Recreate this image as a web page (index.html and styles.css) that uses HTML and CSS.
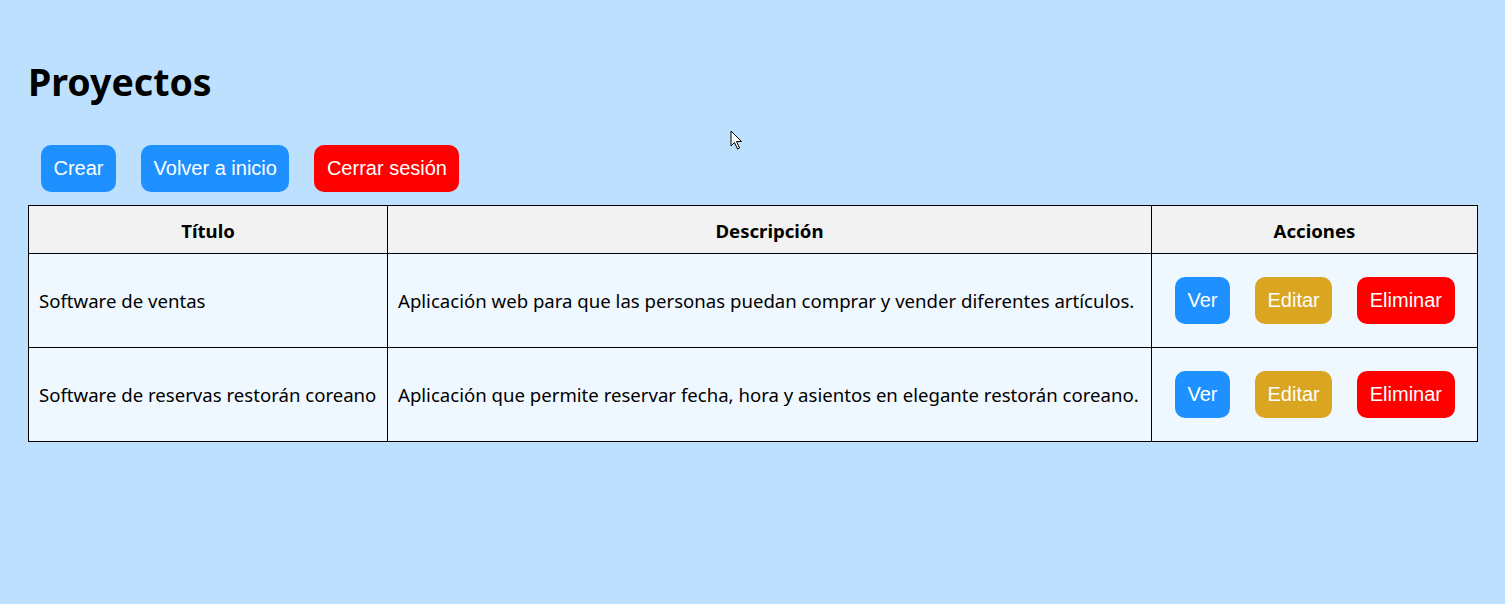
FILE: index.html
```html
<!DOCTYPE html>
<html lang="es">
<head>
<meta charset="utf-8">
<title>Proyectos</title>
<link rel="stylesheet" href="styles.css">
</head>
<body>
<h1 class="title">Proyectos</h1>
<div class="toolbar">
  <a class="btn btn-blue" href="#">Crear</a>
  <a class="btn btn-blue" href="#">Volver a inicio</a>
  <a class="btn btn-red" href="#">Cerrar sesión</a>
</div>
<table class="grid">
  <colgroup>
    <col class="c1"><col class="c2"><col class="c3">
  </colgroup>
  <thead>
    <tr><th>Título</th><th>Descripción</th><th>Acciones</th></tr>
  </thead>
  <tbody>
    <tr>
      <td>Software de ventas</td>
      <td>Aplicación web para que las personas puedan comprar y vender diferentes artículos.</td>
      <td class="actions"><div class="action-row"><a class="btn btn-blue" href="#">Ver</a><a class="btn btn-gold" href="#">Editar</a><a class="btn btn-red" href="#">Eliminar</a></div></td>
    </tr>
    <tr>
      <td>Software de reservas restorán coreano</td>
      <td>Aplicación que permite reservar fecha, hora y asientos en elegante restorán coreano.</td>
      <td class="actions"><div class="action-row"><a class="btn btn-blue" href="#">Ver</a><a class="btn btn-gold" href="#">Editar</a><a class="btn btn-red" href="#">Eliminar</a></div></td>
    </tr>
  </tbody>
</table>
<svg class="cursor" width="14" height="22" viewBox="0 0 14 22"><path d="M1 1 L1 16 L4.5 12.5 L7.5 19 L9.5 18 L6.5 11.5 L11.5 11.5 Z" fill="#fff" stroke="#000" stroke-width="1"/></svg>
</body>
</html>
```
FILE: styles.css
```css
html, body {
  margin: 0;
  padding: 0;
}
body {
  background: #bde0fe;
  font-family: "Noto Sans", "Open Sans", sans-serif;
  color: #000;
  padding: 0 28px;
  position: relative;
  min-height: 604px;
  box-sizing: border-box;
}
.title {
  margin: 0;
  padding-top: 54px;
  font-size: 37.5px;
  font-weight: 700;
  line-height: 56px;
}
.toolbar {
  display: flex;
  gap: 25px;
  padding: 35px 13px 13px;
}
.btn {
  display: inline-block;
  font-family: "Liberation Sans", Arial, sans-serif;
  font-size: 20px;
  line-height: 23px;
  padding: 12px 12.5px;
  border-radius: 10px;
  color: #fff;
  text-decoration: none;
}
.btn-blue { background: #1e90ff; }
.btn-red { background: #ff0000; }
.btn-gold { background: #daa520; }
.grid {
  width: 100%;
  border-collapse: collapse;
  table-layout: fixed;
  font-size: 18.6px;
}
.c1 { width: 359px; }
.c2 { width: 764px; }
.c3 { width: 326px; }
.grid th, .grid td {
  border: 1px solid #000;
  text-align: left;
  padding: 10px;
  white-space: nowrap;
}
.grid th {
  background: #f2f2f2;
  text-align: center;
  font-weight: 700;
  padding: 13px 10px 10px;
  line-height: 24px;
}
.grid td {
  background: #f0f8ff;
  line-height: 24px;
}
.grid td.actions {
  padding: 10px;
}
.action-row {
  display: flex;
  gap: 25px;
  padding: 13px 13px;
}
.cursor {
  position: absolute;
  left: 730px;
  top: 130px;
}
```
